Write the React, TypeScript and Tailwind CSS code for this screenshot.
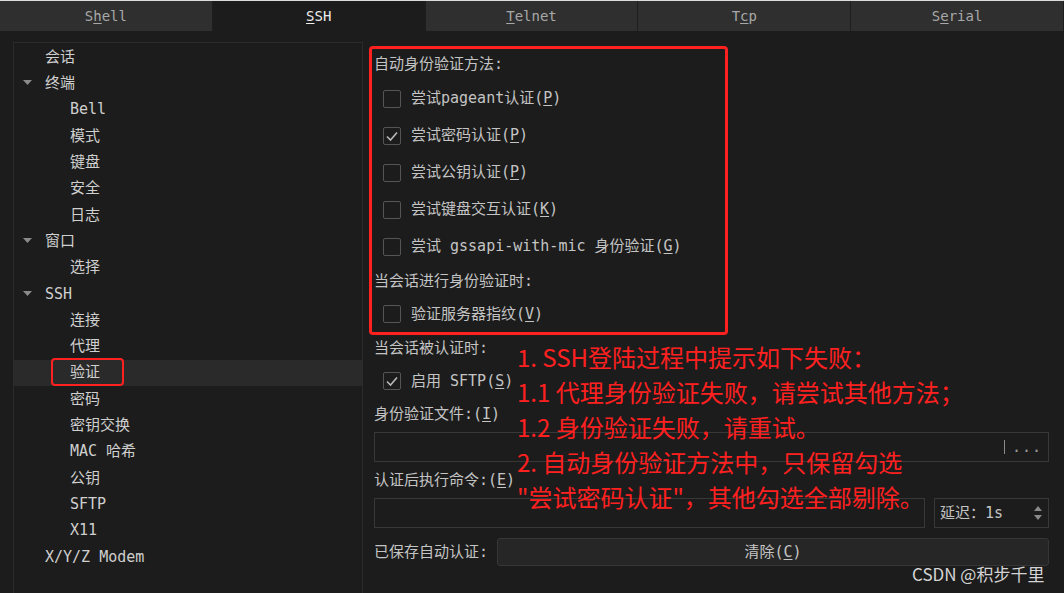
import React from "react";

const MONO = 'font-["DejaVu_Sans_Mono","Noto_Sans_CJK_SC",monospace]';

const tabs = [
  { pre: "S", key: "h", post: "ell" },
  { pre: "", key: "S", post: "SH", active: true },
  { pre: "", key: "T", post: "elnet" },
  { pre: "T", key: "c", post: "p" },
  { pre: "S", key: "e", post: "rial" },
];

const tree = [
  { label: "会话", level: 0 },
  { label: "终端", level: 0, open: true },
  { label: "Bell", level: 1 },
  { label: "模式", level: 1 },
  { label: "键盘", level: 1 },
  { label: "安全", level: 1 },
  { label: "日志", level: 1 },
  { label: "窗口", level: 0, open: true },
  { label: "选择", level: 1 },
  { label: "SSH", level: 0, open: true },
  { label: "连接", level: 1 },
  { label: "代理", level: 1 },
  { label: "验证", level: 1, selected: true },
  { label: "密码", level: 1 },
  { label: "密钥交换", level: 1 },
  { label: "MAC 哈希", level: 1 },
  { label: "公钥", level: 1 },
  { label: "SFTP", level: 1 },
  { label: "X11", level: 1 },
  { label: "X/Y/Z Modem", level: 0 },
];

const methods = [
  { text: "尝试pageant认证(", key: "P", checked: false },
  { text: "尝试密码认证(", key: "P", checked: true },
  { text: "尝试公钥认证(", key: "P", checked: false },
  { text: "尝试键盘交互认证(", key: "K", checked: false },
  { text: "尝试 gssapi-with-mic 身份验证(", key: "G", checked: false },
];

const notes = [
  "1. SSH登陆过程中提示如下失败：",
  "1.1 代理身份验证失败，请尝试其他方法；",
  "1.2 身份验证失败，请重试。",
  "2. 自动身份验证方法中，只保留勾选",
  "\"尝试密码认证\"，其他勾选全部剔除。",
];

function Check({ checked }: { checked: boolean }) {
  return (
    <div className="w-[18px] h-[18px] border border-[#555] rounded-[2px] bg-[#1c1c1c] flex items-center justify-center">
      {checked && (
        <svg width="14" height="14" viewBox="0 0 14 14">
          <polyline points="2,7.5 5.5,11 12,3.5" fill="none" stroke="#b8b8b8" strokeWidth="1.6" />
        </svg>
      )}
    </div>
  );
}

function Label({ text, k }: { text: string; k: string }) {
  return (
    <span>
      {text}
      <span className="underline underline-offset-2">{k}</span>)
    </span>
  );
}

export default function App() {
  return (
    <div className={`relative w-[1064px] h-[593px] overflow-hidden bg-[#1c1c1c] text-[#c4c4c4] ${MONO}`}>
      {/* Tabs */}
      <div className="border-t border-[#dcdcdc] flex h-[31px]">
        {tabs.map((t, i) => (
          <div
            key={i}
            className={`flex-1 flex items-center justify-center text-[14px] border-r border-[#1e1e1e] ${
              t.active ? "bg-[#1c1c1c] text-[#ececec]" : "bg-[#2f2f2f] text-[#a8a8a8]"
            }`}
          >
            {t.pre}
            <span className="underline underline-offset-2">{t.key}</span>
            {t.post}
          </div>
        ))}
      </div>

      <div className="flex pt-[11px]">
        {/* Tree */}
        <div className="ml-[13px] w-[350px] h-[560px] border border-[#2b2b2b] pt-[1px] text-[15px] text-[#cfcfcf]">
          {tree.map((n, i) => (
            <div
              key={i}
              className={`h-[26.3px] flex items-center relative ${n.selected ? "bg-[#2a2a2a]" : ""}`}
            >
              {n.open && (
                <svg className="absolute left-[9px]" width="9" height="6" viewBox="0 0 9 6">
                  <polygon points="0,0 9,0 4.5,5" fill="#8a8a8a" />
                </svg>
              )}
              <span className={n.level === 0 ? "ml-[31px]" : "ml-[56px]"}>{n.label}</span>
            </div>
          ))}
        </div>

        {/* Settings */}
        <div className="ml-[11px] w-[675px] flex flex-col text-[15px] text-[#c4c4c4] pt-[10px]">
          <div className="h-[24px] flex items-center">自动身份验证方法:</div>
          <div className="mt-[4px]">
            {methods.map((m, i) => (
              <div key={i} className="h-[37px] flex items-center gap-[10px] pl-[9px]">
                <Check checked={m.checked} />
                <Label text={m.text} k={m.key} />
              </div>
            ))}
          </div>
          <div className="h-[32px] flex items-center">当会话进行身份验证时:</div>
          <div className="h-[34px] flex items-center gap-[10px] pl-[9px]">
            <Check checked={false} />
            <Label text="验证服务器指纹(" k="V" />
          </div>
          <div className="h-[34px] flex items-center">当会话被认证时:</div>
          <div className="h-[32px] flex items-center gap-[10px] pl-[9px]">
            <Check checked />
            <span>
              启用 SFTP(<span className="underline underline-offset-2">S</span>)
            </span>
          </div>
          <div className="h-[35px] flex items-center">
            <Label text="身份验证文件:(" k="I" />
          </div>
          <div className="h-[30px] border border-[#383838] flex items-center justify-end pr-[6px] text-[#9a9a9a]">
            <span className="w-px h-[14px] bg-[#8a8a8a] mr-[7px]" />
            <span className="tracking-[1px]">...</span>
          </div>
          <div className="h-[36px] flex items-center">
            <Label text="认证后执行命令:(" k="E" />
          </div>
          <div className="h-[30px] flex gap-[9px]">
            <div className="flex-1 border border-[#383838]" />
            <div className="w-[115px] border border-[#383838] flex items-center justify-between pl-[5px] pr-[5px]">
              <span>延迟：1s</span>
              <svg width="10" height="18" viewBox="0 0 10 18">
                <polygon points="1,7 9,7 5,2" fill="#8a8a8a" />
                <polygon points="1,11 9,11 5,16" fill="#8a8a8a" />
              </svg>
            </div>
          </div>
          <div className="mt-[10px] h-[28px] flex items-center">
            <span className="w-[123px]">已保存自动认证:</span>
            <div className="flex-1 h-[28px] bg-[#262626] border border-[#363636] rounded-[3px] flex items-center justify-center">
              <Label text="清除(" k="C" />
            </div>
          </div>
        </div>
      </div>

      {/* Annotations */}
      <div className="absolute left-[51px] top-[358px] w-[73px] h-[28px] border-2 border-[#ff2020] rounded-[4px]" />
      <div className="absolute left-[369px] top-[46px] w-[359px] h-[289px] border-[3px] border-[#ff2020] rounded-[4px]" />
      <div className='absolute left-[517px] top-[339px] text-[24px] leading-[35px] text-[#ff2020] font-["Noto_Sans_CJK_SC",sans-serif]'>
        {notes.map((n, i) => (
          <div key={i}>{n}</div>
        ))}
      </div>
      <div className='absolute left-[912px] top-[561px] text-[17px] text-[#d4d4d4] font-["Noto_Sans_CJK_SC",sans-serif]'>
        CSDN @积步千里
      </div>
    </div>
  );
}
